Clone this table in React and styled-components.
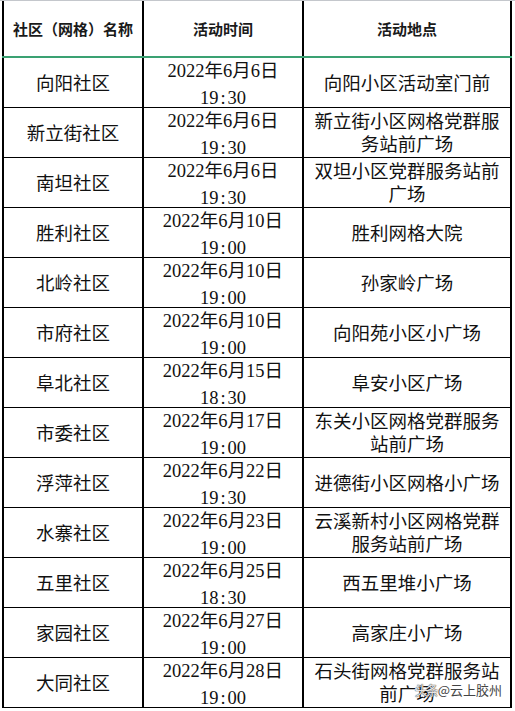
import styled, { createGlobalStyle } from 'styled-components'

const GlobalStyle = createGlobalStyle`
    html, body {
        margin: 0;
        padding: 0;
        background: #fff;
    }
`;

const Page = styled.div`
    width: 515px;
    height: 711px;
    overflow: hidden;
    padding-left: 2px;
    box-sizing: border-box;
    position: relative;
    border-top: 1px solid #c4c7cc;
`;

const Sheet = styled.table`
    border-collapse: collapse;
    table-layout: fixed;
    width: 508px;
    margin-top: -1px;
`;

const HeadCell = styled.th`
    height: 55px;
    padding: 0;
    border-left: 2px solid #000;
    border-right: 2px solid #000;
    border-top: 1px solid #c4c7cc;
    border-bottom: 2px solid #3aa172;
    font-family: "Noto Sans CJK SC", "Noto Sans", sans-serif;
    font-size: 15px;
    font-weight: 700;
    color: #1a1a1a;
    text-align: center;
    vertical-align: middle;
    white-space: nowrap;
`;

const Row = styled.tr`
    height: 49px;
`;

const Cell = styled.td`
    position: relative;
    height: 49px;
    padding: ${p => (p.$top ? '0' : '3px 4px 0')};
    box-sizing: border-box;
    border-left: 2px solid #000;
    border-right: 2px solid #000;
    border-bottom: 1px solid #000;
    font-family: "Liberation Serif", "Noto Sans CJK SC", serif;
    font-size: 18.5px;
    line-height: 23px;
    color: #111;
    text-align: center;
    vertical-align: ${p => (p.$top ? 'top' : 'middle')};
    overflow: visible;
`;

const DateBox = styled.div`
    height: 49px;
    line-height: 27px;
    overflow: visible;
    white-space: nowrap;
`;

const Colon = styled.span`
    padding: 0 2px;
`;

const Mark = styled.div`
    position: absolute;
    right: 8px;
    bottom: 9px;
    display: flex;
    align-items: center;
    gap: 1px;
    font-family: "Noto Sans CJK SC", "Noto Sans", sans-serif;
    font-size: 13px;
    line-height: 16px;
    white-space: nowrap;
`;

const MarkLogo = styled.span`
    color: rgba(255, 255, 255, 0.9);
    text-shadow: 0 0 1px #333, 0 0 1px #333;
    letter-spacing: -2px;
`;

const MarkName = styled.span`
    color: #444;
    text-shadow: 0 0 2px #fff, 0 0 2px #fff, 0 0 1px #fff;
`;

const rows = [
    ['向阳社区', '2022年6月6日', '19:30', '向阳小区活动室门前'],
    ['新立街社区', '2022年6月6日', '19:30', '新立街小区网格党群服务站前广场'],
    ['南坦社区', '2022年6月6日', '19:30', '双坦小区党群服务站前广场'],
    ['胜利社区', '2022年6月10日', '19:00', '胜利网格大院'],
    ['北岭社区', '2022年6月10日', '19:00', '孙家岭广场'],
    ['市府社区', '2022年6月10日', '19:00', '向阳苑小区小广场'],
    ['阜北社区', '2022年6月15日', '18:30', '阜安小区广场'],
    ['市委社区', '2022年6月17日', '19:00', '东关小区网格党群服务站前广场'],
    ['浮萍社区', '2022年6月22日', '19:30', '进德街小区网格小广场'],
    ['水寨社区', '2022年6月23日', '19:00', '云溪新村小区网格党群服务站前广场'],
    ['五里社区', '2022年6月25日', '18:30', '西五里堆小广场'],
    ['家园社区', '2022年6月27日', '19:00', '高家庄小广场'],
    ['大同社区', '2022年6月28日', '19:00', '石头街网格党群服务站前广场'],
]

export default function App() {
    return (
        <Page>
            <GlobalStyle />
            <Sheet>
                <colgroup>
                    <col style={{ width: 140 }} />
                    <col style={{ width: 160 }} />
                    <col style={{ width: 208 }} />
                </colgroup>
                <thead>
                    <tr>
                        <HeadCell>社区（网格）名称</HeadCell>
                        <HeadCell>活动时间</HeadCell>
                        <HeadCell>活动地点</HeadCell>
                    </tr>
                </thead>
                <tbody>
                    {rows.map(([name, day, time, place], i) => {
                        const [h, m] = time.split(':')
                        return (
                            <Row key={name}>
                                <Cell>{name}</Cell>
                                <Cell $top>
                                    <DateBox>
                                        <div>{day}</div>
                                        <div>{h}<Colon>:</Colon>{m}</div>
                                    </DateBox>
                                </Cell>
                                <Cell>
                                    {place}
                                    {i === rows.length - 1 && (
                                        <Mark>
                                            <MarkLogo>头条</MarkLogo>
                                            <MarkName>@云上胶州</MarkName>
                                        </Mark>
                                    )}
                                </Cell>
                            </Row>
                        )
                    })}
                </tbody>
            </Sheet>
        </Page>
    )
}
